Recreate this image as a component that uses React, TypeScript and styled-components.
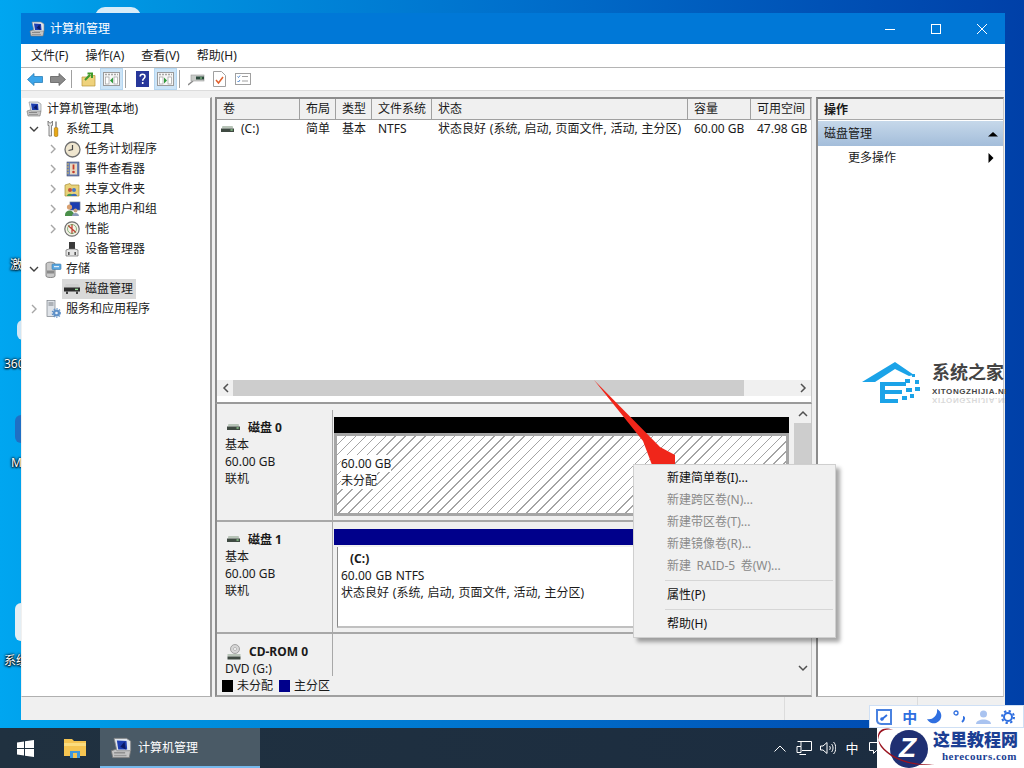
import React from "react";
import styled, { createGlobalStyle } from "styled-components";

const FONT = `"Noto Sans", "Noto Sans CJK SC", sans-serif`;

const Global = createGlobalStyle`
  html, body { margin: 0; padding: 0; width: 1024px; height: 768px; overflow: hidden; }
  body { font: 12px/16px ${FONT}; color: #1a1a1a; }
  * { box-sizing: border-box; }
`;

const Desktop = styled.div`
  position: relative;
  width: 1024px;
  height: 768px;
  overflow: hidden;
  display: flex;
  flex-direction: column;
  background: linear-gradient(90deg, #00a6f0 0%, #0093e0 15%, #0070cc 50%, #0052b6 80%, #0040a8 100%);
`;
const DesktopArea = styled.div`
  flex: 1;
  position: relative;
`;
const DesktopLabel = styled.div<{ $top: number; $left: number }>`
  position: absolute;
  top: ${(p) => p.$top}px;
  left: ${(p) => p.$left}px;
  color: #fff;
  font-size: 12px;
  line-height: 14px;
  white-space: nowrap;
  text-shadow: 0 0 2px #000, 0 1px 2px #000, 0 0 3px #012;
`;
const DesktopIconBit = styled.div<{ $top: number; $left: number; $h: number; $color: string }>`
  position: absolute;
  top: ${(p) => p.$top}px;
  left: ${(p) => p.$left}px;
  width: 12px;
  height: ${(p) => p.$h}px;
  border-radius: 6px 0 0 6px;
  background: ${(p) => p.$color};
`;
const BackTab = styled.div`
  position: absolute;
  left: 95px;
  top: 7px;
  width: 46px;
  height: 10px;
  border-radius: 12px 12px 0 0;
  background: #d8ecf8;
`;

const Window = styled.div`
  position: absolute;
  left: 21px;
  top: 13px;
  width: 984px;
  height: 707px;
  display: flex;
  flex-direction: column;
  background: #f0f0f0;
`;
const TitleBar = styled.div`
  height: 31px;
  flex: none;
  display: flex;
  align-items: center;
  background: #0078d7;
  color: #fff;
  padding-left: 8px;
`;
const TitleText = styled.div`
  flex: 1;
  font-size: 12px;
  padding-left: 5px;
`;
const WinButton = styled.div`
  width: 46px;
  height: 31px;
  display: flex;
  align-items: center;
  justify-content: center;
`;
const MenuBar = styled.div`
  height: 24px;
  flex: none;
  background: #fff;
  border-bottom: 1px solid #b4b4b4;
  display: flex;
  align-items: center;
  padding-left: 10px;
  gap: 17px;
`;
const MenuItem = styled.div`
  font-size: 12px;
  white-space: nowrap;
`;
const ToolBar = styled.div`
  height: 23px;
  flex: none;
  background: #fff;
  border-bottom: 1px solid #dcdcdc;
  display: flex;
  align-items: stretch;
  padding-left: 2px;
`;
const ToolButton = styled.div<{ $active?: boolean }>`
  width: 23px;
  display: flex;
  align-items: center;
  justify-content: center;
  background: ${(p) => (p.$active ? "#cce4f7" : "transparent")};
  border: 1px solid ${(p) => (p.$active ? "#b5d6f0" : "transparent")};
`;
const ToolSep = styled.div`
  width: 1px;
  margin: 2px 5px 2px 2px;
  background: #a0a0a0;
`;
const Content = styled.div`
  flex: 1;
  min-height: 0;
  display: flex;
  padding-top: 6px;
  background: #f0f0f0;
`;
const Pane = styled.div`
  border-style: solid;
  border-width: 2px 1px 1px 2px;
  border-color: #8c8c8c #c8c8c8 #b0b0b0 #8c8c8c;
  background: #fff;
`;
const TreePane = styled(Pane)`
  width: 191px;
  margin-right: 3px;
  padding-top: 1px;
  border-width: 1px 2px 1px 1px;
  border-color: #f0f0f0 #9a9a9a #b0b0b0 #f0f0f0;
`;
const TreeRow = styled.div<{ $level: number }>`
  height: 20px;
  display: flex;
  align-items: center;
  padding-left: ${(p) => (p.$level === 0 ? 3 : p.$level === 1 ? 5 : 24)}px;
  font-size: 12px;
  white-space: nowrap;
`;
const Chevron = styled.div`
  width: 14px;
  height: 20px;
  margin-right: 3px;
  display: flex;
  align-items: center;
  justify-content: center;
  flex: none;
`;
const TreeIcon = styled.div`
  width: 18px;
  height: 18px;
  flex: none;
  margin: 0 4px 0 0;
  display: flex;
  align-items: center;
  justify-content: center;
`;
const TreeLabel = styled.div<{ $selected?: boolean }>`
  display: flex;
  align-items: center;
  height: 20px;
  background: ${(p) => (p.$selected ? "#d9d9d9" : "transparent")};
  margin-left: ${(p) => (p.$selected ? "-1px" : "0")};
  padding: ${(p) => (p.$selected ? "0 3px 0 1px" : "0")};
`;

const Center = styled.div`
  width: 597px;
  margin-right: 4px;
  display: flex;
  flex-direction: column;
`;
const TablePane = styled(Pane)`
  height: 307px;
  flex: none;
  display: flex;
  flex-direction: column;
  border-bottom: 2px solid #9a9a9a;
`;
const COLS = "83px 36px 36px 60px 256px 63px 60px";
const HeaderRow = styled.div`
  display: grid;
  grid-template-columns: ${COLS};
  height: 21px;
  flex: none;
  background: #f0f0f0;
  border-bottom: 1px solid #a0a0a0;
`;
const HeaderCell = styled.div`
  padding-left: 6px;
  line-height: 20px;
  border-right: 1px solid #a0a0a0;
  white-space: nowrap;
  overflow: hidden;
`;
const DataRow = styled.div`
  display: grid;
  grid-template-columns: ${COLS};
  height: 18px;
  flex: none;
`;
const DataCell = styled.div`
  padding-left: 6px;
  line-height: 18px;
  white-space: pre;
  display: flex;
  align-items: center;
  overflow: hidden;
`;
const VolumeCell = styled(DataCell)`
  padding-left: 4px;
  gap: 7px;
`;
const StateCell = styled(DataCell)`
  word-spacing: 0.7px;
`;
const Spacer = styled.div`
  flex: 1;
`;
const HScroll = styled.div`
  height: 16px;
  flex: none;
  margin-bottom: 6px;
  background: #f0f0f0;
  display: flex;
  align-items: stretch;
`;
const ScrollEnd = styled.div`
  width: 17px;
  flex: none;
  display: flex;
  align-items: center;
  justify-content: center;
`;
const HThumb = styled.div`
  width: 511px;
  margin-left: -1px;
  background: #cdcdcd;
`;
const LowerPane = styled.div`
  flex: 1;
  min-height: 0;
  display: flex;
  flex-direction: column;
  background: #f0f0f0;
  border-left: 2px solid #8c8c8c;
  border-bottom: 2px solid #a0a0a0;
  border-right: 1px solid #c8c8c8;
`;
const DiskArea = styled.div`
  flex: 1;
  min-height: 0;
  display: flex;
`;
const DiskList = styled.div`
  flex: 1;
  min-width: 0;
  padding-top: 6px;
  overflow: hidden;
`;
const DiskRow = styled.div<{ $h: number }>`
  height: ${(p) => p.$h}px;
  display: flex;
  border-bottom: 2px solid #a8a8a8;
  &:last-child { border-bottom: none; }
`;
const DiskInfo = styled.div`
  width: 116px;
  flex: none;
  padding: 7px 0 0 8px;
  background: #f0f0f0;
  border-right: 1px solid #a8a8a8;
  line-height: 17px;
`;
const DiskName = styled.div`
  display: flex;
  align-items: center;
  gap: 8px;
  font-weight: 700;
  height: 19px;
  padding: 2px 0 0 2px;
`;
const DiskTrack = styled.div`
  flex: 1;
  min-width: 0;
  padding: 7px 5px 0 1px;
  display: flex;
  flex-direction: column;
`;
const DiskBar = styled.div<{ $color: string }>`
  height: 16px;
  flex: none;
  background: ${(p) => p.$color};
`;
const PartHatch = styled.div`
  height: 83px;
  flex: none;
  border: 3px solid #a6a6a6;
  padding: 19px 0 0 4px;
  line-height: 17px;
  background: repeating-linear-gradient(135deg, #fff 0 6px, #a4a4a4 6px 7px);
`;
const HatchText = styled.div`
  width: fit-content;
  background: #fff;
`;
const PartPlain = styled.div`
  height: 81px;
  flex: none;
  margin-top: 2px;
  border-left: 1px solid #888;
  margin-left: 3px;
  padding: 3px 0 0 3px;
  background: #fff;
  line-height: 17px;
  word-spacing: 0.7px;
  border-bottom: 2px solid #c0c0c0;
`;
const Bold = styled.div`
  font-weight: 700;
  padding-left: 9px;
`;
const VScroll = styled.div`
  width: 17px;
  flex: none;
  display: flex;
  flex-direction: column;
  background: #f0f0f0;
`;
const VThumb = styled.div`
  height: 208px;
  background: #cdcdcd;
`;
const VEnd = styled.div<{ $h: number }>`
  height: ${(p) => p.$h}px;
  flex: none;
  display: flex;
  align-items: center;
  justify-content: center;
`;
const Legend = styled.div`
  height: 19px;
  flex: none;
  display: flex;
  align-items: center;
  background: #f0f0f0;
  padding: 1px 0 0 5px;
  gap: 4px;
`;
const LegendSwatch = styled.div<{ $color: string }>`
  width: 11px;
  height: 12px;
  background: ${(p) => p.$color};
`;
const LegendText = styled.div`
  margin-right: 2px;
`;

const ActionPane = styled.div`
  width: 188px;
  flex: none;
  background: #fff;
  border-style: solid;
  border-width: 2px 1px 1px 2px;
  border-color: #777 #c8c8c8 #b0b0b0 #8c8c8c;
`;
const ActionHead = styled.div`
  height: 21px;
  background: #f0f0f0;
  border-bottom: 1px solid #a8a8a8;
  padding-left: 6px;
  font-weight: 700;
  line-height: 21px;
`;
const ActionGroup = styled.div`
  height: 25px;
  margin-top: 1px;
  display: flex;
  align-items: center;
  justify-content: space-between;
  padding: 0 5px 0 6px;
  background: linear-gradient(180deg, #c6d8ea, #a3bdda);
`;
const ActionItem = styled.div`
  height: 24px;
  display: flex;
  align-items: center;
  justify-content: space-between;
  padding: 0 7px 0 30px;
`;
const StatusBar = styled.div`
  height: 23px;
  flex: none;
  background: #f0f0f0;
  display: flex;
  justify-content: flex-end;
`;
const StatusCell = styled.div<{ $w: number }>`
  width: ${(p) => p.$w}px;
  border-left: 1px solid #dcdcdc;
`;

const Menu = styled.div`
  position: absolute;
  left: 633px;
  top: 464px;
  width: 203px;
  height: 174px;
  background: #f0f0f0;
  border: 1px solid #cfcfcf;
  padding: 2px;
  box-shadow: 4px 4px 4px rgba(0, 0, 0, 0.35);
`;
const MenuRow = styled.div<{ $disabled?: boolean }>`
  height: 22px;
  line-height: 22px;
  padding-left: 31px;
  font-size: 12px;
  white-space: nowrap;
  word-spacing: 2.4px;
  color: ${(p) => (p.$disabled ? "#8a8a8a" : "#111")};
`;
const MenuSep = styled.div`
  height: 1px;
  margin: 3px 0 3px 29px;
  background: #d6d6d6;
`;
const ArrowSvg = styled.svg`
  position: absolute;
  left: 590px;
  top: 375px;
`;

const SiteMark = styled.div`
  position: absolute;
  left: 862px;
  top: 360px;
  width: 144px;
  height: 48px;
  overflow: hidden;
  display: flex;
  gap: 4px;
`;
const SiteLogo = styled.svg`
  flex: none;
`;
const SiteText = styled.div`
  display: flex;
  flex-direction: column;
  padding-top: 1px;
`;
const SiteName = styled.div`
  font-size: 18px;
  line-height: 22px;
  font-weight: 700;
  color: #444;
  white-space: nowrap;
`;
const SiteUrl = styled.div`
  font-family: "Liberation Sans", sans-serif;
  font-size: 8px;
  line-height: 9px;
  font-weight: 700;
  letter-spacing: 0.6px;
  margin-top: 4px;
  color: #444;
  white-space: nowrap;
`;
const SiteEcho = styled(SiteUrl)`
  margin-top: 0;
  transform: scaleY(-1);
  opacity: 0.2;
`;

const Taskbar = styled.div`
  height: 40px;
  flex: none;
  display: flex;
  align-items: stretch;
  background: linear-gradient(90deg, #203140, #1b2c40);
  color: #fff;
  position: relative;
`;
const TaskIcon = styled.div`
  width: 50px;
  display: flex;
  align-items: center;
  justify-content: center;
`;
const TaskApp = styled.div`
  width: 160px;
  display: flex;
  align-items: center;
  gap: 6px;
  padding: 1px 0 0 10px;
  background: #4a5a66;
  border-bottom: 2px solid #76b9ed;
`;
const TrayArea = styled.div`
  flex: 1;
  display: flex;
  align-items: center;
  justify-content: flex-end;
  padding-right: 140px;
  gap: 8px;
`;
const TrayItem = styled.div`
  width: 16px;
  display: flex;
  justify-content: center;
  font-size: 13px;
`;
const ImeBar = styled.div`
  position: absolute;
  left: 869px;
  top: 705px;
  width: 155px;
  height: 23px;
  background: #fff;
  border: 1px solid #cfe0f5;
  display: flex;
  align-items: center;
  justify-content: space-between;
  padding: 0 8px 0 6px;
  color: #2f6fe0;
`;
const ImeText = styled.div`
  font-size: 15px;
  font-weight: 700;
  color: #2f6fe0;
`;
const CourseMark = styled.div`
  position: absolute;
  left: 877px;
  top: 728px;
  width: 147px;
  height: 40px;
  background: #fff;
  display: flex;
  gap: 4px;
`;
const CourseText = styled.div`
  display: flex;
  flex-direction: column;
  align-items: center;
  width: 85px;
  padding-top: 1px;
`;
const CourseName = styled.div`
  font-family: "Noto Sans CJK SC", serif;
  font-size: 17px;
  line-height: 20px;
  font-weight: 900;
  color: #1c3f94;
  white-space: nowrap;
`;
const CourseUrl = styled.div`
  font-family: "Liberation Serif", serif;
  font-size: 11px;
  line-height: 15px;
  font-weight: 700;
  letter-spacing: 0.5px;
  margin-left: 8px;
  white-space: nowrap;
  color: #1c3f94;
`;
const CourseLogo = styled.div`
  position: relative;
  width: 52px;
  height: 40px;
  flex: none;
`;
const CourseSvg = styled.svg`
  overflow: visible;
`;
const LogoLetter = styled.div`
  position: absolute;
  left: 22px;
  top: 5px;
  font: italic 900 28px/30px "Liberation Sans", sans-serif;
  color: #fff;
`;

/* ---------- icons ---------- */
const ChevR = () => (
  <svg width="8" height="10" viewBox="0 0 8 10"><path d="M2 1l4 4-4 4" fill="none" stroke="#a6a6a6" strokeWidth="1.4" /></svg>
);
const ChevD = () => (
  <svg width="10" height="8" viewBox="0 0 10 8"><path d="M1 2l4 4 4-4" fill="none" stroke="#404040" strokeWidth="1.4" /></svg>
);
const Computer = ({ s = 16 }: { s?: number }) => (
  <svg width={s} height={s} viewBox="0 0 16 16">
    <path d="M1 10l6-2 8 2-1 5H2z" fill="#c4c4c4" stroke="#777" strokeWidth=".6" />
    <path d="M3 1l9 0 3 2v7H5z" fill="#dfe5ec" stroke="#888" strokeWidth=".6" />
    <path d="M5 2.500l7 .4.5 6.100H6z" fill="#1c3db0" />
    <path d="M7.500 7l3-3.500 1 5.500z" fill="#0a1a66" />
    <path d="M3 11.500h8" stroke="#888" strokeWidth="1" />
    <path d="M3 13.500h9" stroke="#999" strokeWidth="1" />
  </svg>
);
const Tools = () => (
  <svg width="16" height="18" viewBox="0 0 16 18">
    <path d="M3 1v4.500h1V16h2.500V5.500h1V1L6 3H4.500z" fill="#e8e8e8" stroke="#6a6a6a" strokeWidth=".8" />
    <path d="M11 1.500v6" stroke="#8c8c8c" strokeWidth="1.6" />
    <rect x="9.300" y="7.500" width="3.500" height="9" rx="1.200" fill="#e8a816" stroke="#9a6a00" strokeWidth=".6" />
  </svg>
);
const Clock = () => (
  <svg width="17" height="17" viewBox="0 0 17 17">
    <circle cx="8.500" cy="8.500" r="7.500" fill="#efe6cf" stroke="#6f6f6f" strokeWidth="1.300" />
    <path d="M8.500 4v4.500L4.500 9.500" stroke="#4a4a4a" strokeWidth="1.200" fill="none" />
  </svg>
);
const EventLog = () => (
  <svg width="15" height="16" viewBox="0 0 15 16">
    <rect x="2" y="1" width="12" height="14" fill="#6d83b8" stroke="#444d70" strokeWidth=".6" />
    <rect x="5" y="2.500" width="7" height="11" fill="#e9d9c0" />
    <path d="M8.500 3.500v5" stroke="#c23a2c" strokeWidth="1.800" />
    <circle cx="8.500" cy="11" r="1.300" fill="#c23a2c" />
    <path d="M2 3h2M2 6h2M2 9h2M2 12h2" stroke="#d8b850" strokeWidth="1" />
  </svg>
);
const Shared = () => (
  <svg width="16" height="15" viewBox="0 0 16 15">
    <path d="M1 3l5-1.500 1 1.500h8v11H1z" fill="#e8d27a" stroke="#a88f3a" strokeWidth=".7" />
    <circle cx="6" cy="8" r="2" fill="#c2523c" />
    <circle cx="10" cy="8" r="2" fill="#4b78c2" />
    <path d="M3 14c0-3 6-3 6 0z" fill="#3f9a55" />
    <path d="M7 14c0-3 6-3 6 0z" fill="#3a6cb8" />
  </svg>
);
const Users = () => (
  <svg width="17" height="16" viewBox="0 0 17 16">
    <rect x="6" y="1" width="10" height="8" fill="#1c3db0" stroke="#6a7a90" strokeWidth=".7" />
    <circle cx="5.500" cy="6" r="2.600" fill="#d8a070" />
    <path d="M1 14c0-6 9-6 9 0v1H1z" fill="#4a8f4a" />
    <circle cx="11.500" cy="9.500" r="2" fill="#c8a080" />
    <path d="M8 15c0-4 7-4 7 0z" fill="#8a9ab8" />
  </svg>
);
const Perf = () => (
  <svg width="16" height="16" viewBox="0 0 16 16">
    <circle cx="8" cy="8" r="7.200" fill="#f4f1e6" stroke="#6f6f6f" strokeWidth="1.200" />
    <path d="M4 4.500l8 7M8 3v10" stroke="#c03a2c" strokeWidth="1.200" />
    <circle cx="8" cy="8" r="4.500" fill="none" stroke="#5a9a55" strokeWidth=".7" />
  </svg>
);
const Device = () => (
  <svg width="14" height="16" viewBox="0 0 14 16">
    <rect x="4" y="1" width="6" height="7" fill="#3a3a3a" />
    <path d="M1 9l3-1h6l3 1v6H1z" fill="#e6e6e6" stroke="#6a6a6a" strokeWidth=".7" />
    <rect x="3" y="11" width="1.600" height="3" fill="#555" />
    <rect x="9.400" y="11" width="1.600" height="3" fill="#555" />
  </svg>
);
const Storage = () => (
  <svg width="17" height="17" viewBox="0 0 17 17">
    <path d="M1 3c0-2.500 9-2.500 9 0v12c0 2-9 2-9 0z" fill="#c9c9c9" stroke="#6f6f6f" strokeWidth=".8" />
    <rect x="2" y="9.500" width="7" height="3" fill="#8a8a8a" />
    <rect x="7" y="3" width="9" height="5.500" rx=".8" fill="#59a6e0" stroke="#3a78a8" strokeWidth=".6" />
    <path d="M9 5.700h5" stroke="#fff" strokeWidth="1" />
  </svg>
);
const DiskTree = () => (
  <svg width="16" height="10" viewBox="0 0 16 10">
    <path d="M2 0h12l2 3v1H0V3z" fill="#cfcfcf" />
    <rect x="0" y="3.500" width="16" height="4" fill="#2c2c2c" />
    <rect x="11" y="4.700" width="3" height="1.400" fill="#9adf9a" />
    <rect x="2" y="7.500" width="2" height="2.500" fill="#444" />
    <rect x="12" y="7.500" width="2" height="2.500" fill="#444" />
  </svg>
);
const Services = () => (
  <svg width="15" height="18" viewBox="0 0 15 18">
    <rect x="1" y="0.500" width="8" height="16" fill="#dfe3e8" stroke="#7a7f86" strokeWidth=".7" />
    <path d="M2.500 3h5M2.500 5h5" stroke="#70757c" strokeWidth=".9" />
    <circle cx="10.500" cy="13" r="3.600" fill="#5f91c8" />
    <circle cx="10.500" cy="13" r="1.300" fill="#e8f0f8" />
    <circle cx="10.500" cy="13" r="4.300" fill="none" stroke="#5f91c8" strokeWidth="1.100" strokeDasharray="1.400 1.400" />
  </svg>
);
const DiskSmall = () => (
  <svg width="13" height="7" viewBox="0 0 13 7">
    <rect x="1" y="0" width="11" height="2.500" rx="1" fill="#b8c4b8" />
    <rect x="0" y="2.500" width="13" height="3.500" fill="#3f4a42" />
    <rect x="9.500" y="3.400" width="2.200" height="1.200" fill="#9adf9a" />
  </svg>
);
const CdIcon = () => (
  <svg width="14" height="16" viewBox="0 0 14 16">
    <circle cx="8" cy="5" r="4.500" fill="#d6d6d6" stroke="#888" strokeWidth=".7" />
    <circle cx="8" cy="5" r="1.500" fill="#fff" stroke="#888" strokeWidth=".5" />
    <rect x="0.500" y="10" width="13" height="2.500" fill="#b8c4b8" />
    <rect x="0.500" y="12.500" width="13" height="3" fill="#3f4a42" />
  </svg>
);
const ArrowH = ({ dir, color = "#505050" }: { dir: "l" | "r"; color?: string }) => (
  <svg width="8" height="10" viewBox="0 0 8 10">
    <path d={dir === "r" ? "M2 1l4 4-4 4" : "M6 1L2 5l4 4"} fill="none" stroke={color} strokeWidth="1.500" />
  </svg>
);
const ArrowV = ({ dir }: { dir: "u" | "d" }) => (
  <svg width="10" height="8" viewBox="0 0 10 8">
    <path d={dir === "u" ? "M1 6l4-4 4 4" : "M1 2l4 4 4-4"} fill="none" stroke="#505050" strokeWidth="1.500" />
  </svg>
);
const Tri = ({ dir }: { dir: "u" | "r" }) => (
  <svg width="10" height="10" viewBox="0 0 10 10">
    <path d={dir === "u" ? "M0 7.500L5 3l5 4.500z" : "M2.500 0L7.500 5l-5 5z"} fill="#000" />
  </svg>
);
const PanelIcon = ({ mark }: { mark: "l" | "r" }) => (
  <svg width="17" height="14" viewBox="0 0 17 14">
    <rect x=".5" y=".5" width="16" height="13" fill="#f6f6f6" stroke="#9a9a9a" />
    <path d="M2 2.500h13" stroke="#a8a8a8" strokeWidth="1.500" strokeDasharray="2 1" />
    <rect x="2.500" y="5" width="3.500" height="7" fill="#fff" stroke="#a0a0a0" strokeWidth=".7" />
    <rect x="11" y="5" width="3.500" height="7" fill="#fff" stroke="#a0a0a0" strokeWidth=".7" />
    <path d={mark === "l" ? "M10 5.500v6L7 8.500z" : "M7 5.500v6l3-3z"} fill="#2f9a3a" />
  </svg>
);

const RedArrow = () => (
  <ArrowSvg width="100" height="100" viewBox="590 375 100 100">
    <path d="M594 380L660 447 675 455V465H652L643 441z" fill="#f0261a" />
  </ArrowSvg>
);

export default function App() {
  return (
    <Desktop>
      <Global />
      <DesktopArea>
        <BackTab />
        <DesktopLabel $top={258} $left={10}>激</DesktopLabel>
        <DesktopIconBit $top={320} $left={17} $h={20} $color="#cfe6f5" />
        <DesktopLabel $top={357} $left={4}>360</DesktopLabel>
        <DesktopIconBit $top={415} $left={15} $h={28} $color="#1f6fc4" />
        <DesktopLabel $top={456} $left={11}>M</DesktopLabel>
        <DesktopIconBit $top={603} $left={15} $h={38} $color="#e4eef4" />
        <DesktopLabel $top={654} $left={4}>系统</DesktopLabel>

        <Window>
          <TitleBar>
            <Computer />
            <TitleText>计算机管理</TitleText>
            <WinButton>
              <svg width="10" height="10" viewBox="0 0 10 10"><path d="M0 5.500h10" stroke="#fff" /></svg>
            </WinButton>
            <WinButton>
              <svg width="10" height="10" viewBox="0 0 10 10"><rect x=".5" y=".5" width="9" height="9" fill="none" stroke="#fff" /></svg>
            </WinButton>
            <WinButton>
              <svg width="10" height="10" viewBox="0 0 10 10"><path d="M0 0l10 10M10 0L0 10" stroke="#fff" /></svg>
            </WinButton>
          </TitleBar>

          <MenuBar>
            <MenuItem>文件(F)</MenuItem>
            <MenuItem>操作(A)</MenuItem>
            <MenuItem>查看(V)</MenuItem>
            <MenuItem>帮助(H)</MenuItem>
          </MenuBar>

          <ToolBar>
            <ToolButton>
              <svg width="16" height="13" viewBox="0 0 16 13"><path d="M.5 6.500L7 .5v3h8.500v6H7v3z" fill="#3ca5ea" stroke="#2a7fb8" strokeWidth=".8" /></svg>
            </ToolButton>
            <ToolButton>
              <svg width="16" height="13" viewBox="0 0 16 13"><path d="M15.500 6.500L9 .5v3H.5v6H9v3z" fill="#8a8a8a" stroke="#5f5f5f" strokeWidth=".8" /></svg>
            </ToolButton>
            <ToolSep />
            <ToolButton>
              <svg width="15" height="15" viewBox="0 0 15 15">
                <path d="M1 5h5l1-1.500h7V14H1z" fill="#efd27c" stroke="#b8963a" strokeWidth=".7" />
                <path d="M4 8l5-5M6.500 1.500H11V6" fill="none" stroke="#3f9a2c" strokeWidth="2" />
              </svg>
            </ToolButton>
            <ToolButton $active><PanelIcon mark="l" /></ToolButton>
            <ToolSep />
            <ToolButton>
              <svg width="13" height="16" viewBox="0 0 13 16">
                <rect width="13" height="16" fill="#27379a" />
                <path d="M4.200 5.500C4.200 2.500 9 2.500 9 5.500c0 2-2.300 2-2.300 4.200M6.700 11v2" fill="none" stroke="#fff" strokeWidth="1.600" />
              </svg>
            </ToolButton>
            <ToolButton $active><PanelIcon mark="r" /></ToolButton>
            <ToolSep />
            <ToolButton>
              <svg width="17" height="14" viewBox="0 0 17 14">
                <path d="M0 13l5-4" stroke="#8a8a8a" strokeWidth="1.500" />
                <rect x="3" y="3" width="13" height="6" fill="#c9ccc9" stroke="#999" strokeWidth=".6" />
                <rect x="8" y="4.500" width="8" height="3" fill="#2c4a3c" />
                <rect x="12" y="5.500" width="2" height="1" fill="#9adf9a" />
              </svg>
            </ToolButton>
            <ToolButton>
              <svg width="13" height="16" viewBox="0 0 13 16">
                <path d="M.5.500h8l4 4v11H.500z" fill="#fff" stroke="#a0a0a0" />
                <path d="M3 9l2.500 3L10 6" fill="none" stroke="#e0602c" strokeWidth="1.500" />
              </svg>
            </ToolButton>
            <ToolButton>
              <svg width="16" height="12" viewBox="0 0 16 12">
                <rect x=".5" y=".5" width="15" height="11" fill="#fff" stroke="#a0a0a0" />
                <path d="M2.500 3.500l1 1 1.500-2M2.500 8l1 1L5 7" fill="none" stroke="#3a78c8" strokeWidth=".9" />
                <path d="M7 3.500h6M7 8h6" stroke="#a0a0a0" />
              </svg>
            </ToolButton>
          </ToolBar>

          <Content>
            <TreePane>
              <TreeRow $level={0}>
                <TreeIcon><Computer /></TreeIcon>
                <TreeLabel>计算机管理(本地)</TreeLabel>
              </TreeRow>
              <TreeRow $level={1}>
                <Chevron><ChevD /></Chevron>
                <TreeIcon><Tools /></TreeIcon>
                <TreeLabel>系统工具</TreeLabel>
              </TreeRow>
              <TreeRow $level={2}>
                <Chevron><ChevR /></Chevron>
                <TreeIcon><Clock /></TreeIcon>
                <TreeLabel>任务计划程序</TreeLabel>
              </TreeRow>
              <TreeRow $level={2}>
                <Chevron><ChevR /></Chevron>
                <TreeIcon><EventLog /></TreeIcon>
                <TreeLabel>事件查看器</TreeLabel>
              </TreeRow>
              <TreeRow $level={2}>
                <Chevron><ChevR /></Chevron>
                <TreeIcon><Shared /></TreeIcon>
                <TreeLabel>共享文件夹</TreeLabel>
              </TreeRow>
              <TreeRow $level={2}>
                <Chevron><ChevR /></Chevron>
                <TreeIcon><Users /></TreeIcon>
                <TreeLabel>本地用户和组</TreeLabel>
              </TreeRow>
              <TreeRow $level={2}>
                <Chevron><ChevR /></Chevron>
                <TreeIcon><Perf /></TreeIcon>
                <TreeLabel>性能</TreeLabel>
              </TreeRow>
              <TreeRow $level={2}>
                <Chevron />
                <TreeIcon><Device /></TreeIcon>
                <TreeLabel>设备管理器</TreeLabel>
              </TreeRow>
              <TreeRow $level={1}>
                <Chevron><ChevD /></Chevron>
                <TreeIcon><Storage /></TreeIcon>
                <TreeLabel>存储</TreeLabel>
              </TreeRow>
              <TreeRow $level={2}>
                <Chevron />
                <TreeLabel $selected>
                  <TreeIcon><DiskTree /></TreeIcon>
                  磁盘管理
                </TreeLabel>
              </TreeRow>
              <TreeRow $level={1}>
                <Chevron><ChevR /></Chevron>
                <TreeIcon><Services /></TreeIcon>
                <TreeLabel>服务和应用程序</TreeLabel>
              </TreeRow>
            </TreePane>

            <Center>
              <TablePane>
                <HeaderRow>
                  <HeaderCell>卷</HeaderCell>
                  <HeaderCell>布局</HeaderCell>
                  <HeaderCell>类型</HeaderCell>
                  <HeaderCell>文件系统</HeaderCell>
                  <HeaderCell>状态</HeaderCell>
                  <HeaderCell>容量</HeaderCell>
                  <HeaderCell>可用空间</HeaderCell>
                </HeaderRow>
                <DataRow>
                  <VolumeCell><DiskSmall /><span>(C:)</span></VolumeCell>
                  <DataCell>简单</DataCell>
                  <DataCell>基本</DataCell>
                  <DataCell>NTFS</DataCell>
                  <StateCell>状态良好 (系统, 启动, 页面文件, 活动, 主分区)</StateCell>
                  <DataCell>60.00 GB</DataCell>
                  <DataCell>47.98 GB</DataCell>
                </DataRow>
                <Spacer />
                <HScroll>
                  <ScrollEnd><ArrowH dir="l" /></ScrollEnd>
                  <HThumb />
                  <Spacer />
                  <ScrollEnd><ArrowH dir="r" /></ScrollEnd>
                </HScroll>
              </TablePane>
              <LowerPane>
                <DiskArea>
                  <DiskList>
                    <DiskRow $h={112}>
                      <DiskInfo>
                        <DiskName><DiskSmall />磁盘 0</DiskName>
                        <div>基本</div>
                        <div>60.00 GB</div>
                        <div>联机</div>
                      </DiskInfo>
                      <DiskTrack>
                        <DiskBar $color="#000" />
                        <PartHatch>
                          <HatchText>60.00 GB</HatchText>
                          <HatchText>未分配</HatchText>
                        </PartHatch>
                      </DiskTrack>
                    </DiskRow>
                    <DiskRow $h={112}>
                      <DiskInfo>
                        <DiskName><DiskSmall />磁盘 1</DiskName>
                        <div>基本</div>
                        <div>60.00 GB</div>
                        <div>联机</div>
                      </DiskInfo>
                      <DiskTrack>
                        <DiskBar $color="#00008b" />
                        <PartPlain>
                          <Bold>(C:)</Bold>
                          <div>60.00 GB NTFS</div>
                          <div>状态良好 (系统, 启动, 页面文件, 活动, 主分区)</div>
                        </PartPlain>
                      </DiskTrack>
                    </DiskRow>
                    <DiskRow $h={48}>
                      <DiskInfo>
                        <DiskName><CdIcon />CD-ROM 0</DiskName>
                        <div>DVD (G:)</div>
                      </DiskInfo>
                    </DiskRow>
                  </DiskList>
                  <VScroll>
                    <VEnd $h={19}><ArrowV dir="u" /></VEnd>
                    <VThumb />
                    <Spacer />
                    <VEnd $h={17}><ArrowV dir="d" /></VEnd>
                  </VScroll>
                </DiskArea>
                <Legend>
                  <LegendSwatch $color="#000" />
                  <LegendText>未分配</LegendText>
                  <LegendSwatch $color="#00008b" />
                  <LegendText>主分区</LegendText>
                </Legend>
              </LowerPane>
            </Center>

            <ActionPane>
              <ActionHead>操作</ActionHead>
              <ActionGroup>磁盘管理<Tri dir="u" /></ActionGroup>
              <ActionItem>更多操作<Tri dir="r" /></ActionItem>
            </ActionPane>
          </Content>

          <StatusBar>
            <StatusCell $w={133} />
            <StatusCell $w={88} />
          </StatusBar>
        </Window>

        <RedArrow />

        <SiteMark>
          <SiteLogo width="66" height="46" viewBox="0 0 66 46">
            <path d="M0 22L33 2 52 15 47 16 33 9 13 22z" fill="#1ba3e8" />
            <path d="M18 22h26v4H23v4h17v4H23v5h13v4H18z" fill="#1ba3e8" />
            <path d="M43 19h5v4h-5zM50 14h3v3h-3zM53 20h4v4h-4zM44 28h6v4h-6zM53 27h5v4h-5zM40 36h5v4h-5zM48 34h4v4h-4z" fill="#1ba3e8" />
          </SiteLogo>
          <SiteText>
            <SiteName>系统之家</SiteName>
            <SiteUrl>XITONGZHIJIA.NET</SiteUrl>
            <SiteEcho>XITONGZHIJIA.NET</SiteEcho>
          </SiteText>
        </SiteMark>

        <Menu>
          <MenuRow>新建简单卷(I)...</MenuRow>
          <MenuRow $disabled>新建跨区卷(N)...</MenuRow>
          <MenuRow $disabled>新建带区卷(T)...</MenuRow>
          <MenuRow $disabled>新建镜像卷(R)...</MenuRow>
          <MenuRow $disabled>新建 RAID-5 卷(W)...</MenuRow>
          <MenuSep />
          <MenuRow>属性(P)</MenuRow>
          <MenuSep />
          <MenuRow>帮助(H)</MenuRow>
        </Menu>
      </DesktopArea>

      <Taskbar>
        <TaskIcon>
          <svg width="17" height="17" viewBox="0 0 17 17">
            <path d="M0 2.500L7 1.500v6.500H0zM8 1.300L17 0v8H8zM0 9h7v6.500L0 14.500zM8 9h9v8l-9-1.300z" fill="#fff" />
          </svg>
        </TaskIcon>
        <TaskIcon>
          <svg width="22" height="20" viewBox="0 0 22 20">
            <path d="M0 1h8l2 2h12v15H0z" fill="#f5c451" />
            <rect y="5" width="22" height="3" fill="#fbdc7e" />
            <rect x="6" y="13" width="10" height="7" fill="#3f97de" />
            <rect x="9" y="15" width="4" height="5" fill="#f5c451" />
          </svg>
        </TaskIcon>
        <TaskApp>
          <Computer s={22} />
          计算机管理
        </TaskApp>
        <TrayArea>
          <TrayItem>
            <svg width="12" height="7" viewBox="0 0 12 7"><path d="M.5 6.500L6 1l5.500 5.500" fill="none" stroke="#fff" /></svg>
          </TrayItem>
          <TrayItem>
            <svg width="16" height="14" viewBox="0 0 16 14" fill="none" stroke="#fff">
              <path d="M1.500.5h14v9H6M3.500 13.500H10M1 5.500h4v6H1zM2 .5h3v5" />
            </svg>
          </TrayItem>
          <TrayItem>
            <svg width="16" height="14" viewBox="0 0 16 14" fill="none" stroke="#fff">
              <path d="M.5 5v4H3l4 3.500v-11L3 5zM9.500 5c1 1 1 3 0 4M11.500 3c2 2 2 6 0 8M13.500 1c3 3 3 9 0 12" />
            </svg>
          </TrayItem>
          <TrayItem>中</TrayItem>
          <TrayItem>
            <svg width="14" height="12" viewBox="0 0 14 12" fill="none" stroke="#fff"><path d="M.5.500h13v8h-6l-3 3v-3h-4z" /></svg>
          </TrayItem>
        </TrayArea>
      </Taskbar>

      <ImeBar>
        <svg width="16" height="16" viewBox="0 0 16 16">
          <path d="M0 0h16v16H5a5 5 0 0 1-5-5z" fill="#4a82e0" />
          <path d="M2 2h12v12H5.500a3.500 3.500 0 0 1-3.500-3.500z" fill="#fff" />
          <path d="M5 11l6-5" stroke="#2f6fe0" strokeWidth="1.800" />
          <circle cx="6" cy="10" r="1.800" fill="#2f6fe0" />
        </svg>
        <ImeText>中</ImeText>
        <svg width="15" height="15" viewBox="0 0 15 15"><path d="M10 0a7.500 7.500 0 1 1-10 10c5 1.500 11-3 10-10z" fill="#2f6fe0" /></svg>
        <svg width="13" height="13" viewBox="0 0 13 13">
          <circle cx="3" cy="3" r="2" fill="none" stroke="#2f6fe0" strokeWidth="1.300" />
          <path d="M10 7c1.500 0 1.500 3-1 5" fill="none" stroke="#2f6fe0" strokeWidth="2" />
        </svg>
        <svg width="15" height="14" viewBox="0 0 15 14">
          <circle cx="7.500" cy="4" r="3.500" fill="#a9c3f0" />
          <path d="M0 14c0-6 15-6 15 0z" fill="#a9c3f0" />
        </svg>
        <svg width="14" height="14" viewBox="0 0 14 14">
          <circle cx="7" cy="7" r="4" fill="none" stroke="#2f6fe0" strokeWidth="2" />
          <circle cx="7" cy="7" r="6" fill="none" stroke="#2f6fe0" strokeWidth="2" strokeDasharray="2.300 2.400" />
        </svg>
      </ImeBar>

      <CourseMark>
        <CourseLogo>
          <CourseSvg width="52" height="40" viewBox="0 0 52 40">
            <circle cx="32" cy="21" r="19" fill="#1f2f72" />
            <path d="M16 2C5-3-3 5 3 15c8 14 32 23 55 21-20 4-44-4-54-17C-2 10 3-1 16 2z" fill="#9a1420" />
          </CourseSvg>
          <LogoLetter>Z</LogoLetter>
        </CourseLogo>
        <CourseText>
          <CourseName>这里教程网</CourseName>
          <CourseUrl>herecours.com</CourseUrl>
        </CourseText>
      </CourseMark>
    </Desktop>
  );
}
